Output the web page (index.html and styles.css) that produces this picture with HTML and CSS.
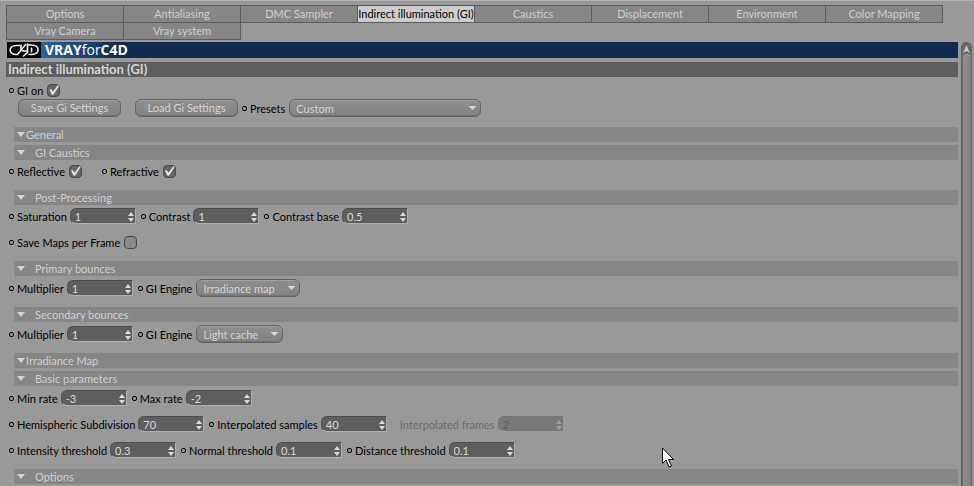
FILE: index.html
```html
<!DOCTYPE html>
<html lang="en">
<head>
<meta charset="utf-8">
<title>VRAYforC4D</title>
<link rel="stylesheet" href="styles.css">
</head>
<body>
<svg class="defs" aria-hidden="true">
  <symbol id="spin" viewBox="0 0 6 10"><path d="M3 0 6 4H0zM0 6h6L3 10z" fill="currentColor"/></symbol>
</svg>

<nav class="tabs">
  <button>Options</button>
  <button>Antialiasing</button>
  <button>DMC Sampler</button>
  <button class="active">Indirect illumination (GI)</button>
  <button>Caustics</button>
  <button>Displacement</button>
  <button>Environment</button>
  <button>Color Mapping</button>
  <button>Vray Camera</button>
  <button>Vray system</button>
</nav>

<div class="body">
  <main class="panel">
    <div class="banner">
      <svg class="logo" viewBox="0 0 34 16" aria-hidden="true">
        <rect width="34" height="16" fill="#050505"/>
        <g fill="none" stroke="#f4f4f4" stroke-width="1.600">
          <path d="M13 3.500H9.500C1 3.500 1 12.500 9.500 12.500h1L19 2"/>
          <path d="M14 2.500v4c0 2 1 2.500 3 2.500h3"/>
          <path d="M20.500 1.500v9L16 14.500"/>
          <path d="M20.500 3H24c9.500 0 9.500 9.500 0 9.500h-2.500M24.500 5.500v5"/>
        </g>
      </svg>
      <div class="brand"><b>VRAY</b>for<b>C4D</b></div>
    </div>
    <h1>Indirect illumination (GI)</h1>

    <div class="intro">
      <div class="row"><label class="dot check">GI on<input type="checkbox" checked></label></div>
      <div class="row">
        <div class="actions">
          <button class="pill">Save Gi Settings</button>
          <button class="pill">Load Gi Settings</button>
        </div>
        <label class="dot" for="presets">Presets</label>
        <span class="drop wide"><select id="presets"><option>Custom</option></select></span>
      </div>
    </div>

    <h2>General</h2>
    <h3>GI Caustics</h3>
    <div class="rows tight">
      <div class="row spread">
        <label class="dot check">Reflective<input type="checkbox" checked></label>
        <label class="dot check">Refractive<input type="checkbox" checked></label>
      </div>
    </div>

    <h3>Post-Processing</h3>
    <div class="rows tight">
      <div class="row">
        <label class="dot" for="sat">Saturation</label>
        <span class="num"><input id="sat" value="1"><svg><use href="#spin"/></svg></span>
        <label class="dot" for="con">Contrast</label>
        <span class="num"><input id="con" value="1"><svg><use href="#spin"/></svg></span>
        <label class="dot" for="base">Contrast base</label>
        <span class="num"><input id="base" value="0.5"><svg><use href="#spin"/></svg></span>
      </div>
      <div class="row"><label class="dot check">Save Maps per Frame<input type="checkbox"></label></div>
    </div>

    <h3>Primary bounces</h3>
    <div class="rows">
      <div class="row">
        <label class="dot" for="mul1">Multiplier</label>
        <span class="num"><input id="mul1" value="1"><svg><use href="#spin"/></svg></span>
        <label class="dot" for="eng1">GI Engine</label>
        <span class="drop"><select id="eng1"><option>Irradiance map</option></select></span>
      </div>
    </div>

    <h3>Secondary bounces</h3>
    <div class="rows">
      <div class="row">
        <label class="dot" for="mul2">Multiplier</label>
        <span class="num"><input id="mul2" value="1"><svg><use href="#spin"/></svg></span>
        <label class="dot" for="eng2">GI Engine</label>
        <span class="drop"><select id="eng2"><option>Light cache</option></select></span>
      </div>
    </div>

    <h2>Irradiance Map</h2>
    <h3>Basic parameters</h3>
    <div class="rows">
      <div class="row">
        <label class="dot" for="min">Min rate</label>
        <span class="num"><input id="min" value="-3"><svg><use href="#spin"/></svg></span>
        <label class="dot" for="max">Max rate</label>
        <span class="num"><input id="max" value="-2"><svg><use href="#spin"/></svg></span>
      </div>
      <div class="row">
        <label class="dot" for="hemi">Hemispheric Subdivision</label>
        <span class="num"><input id="hemi" value="70"><svg><use href="#spin"/></svg></span>
        <label class="dot" for="samp">Interpolated samples</label>
        <span class="num"><input id="samp" value="40"><svg><use href="#spin"/></svg></span>
        <label class="dot off" for="frames">Interpolated frames</label>
        <span class="num off"><input id="frames" value="2" disabled><svg><use href="#spin"/></svg></span>
      </div>
      <div class="row">
        <label class="dot" for="int">Intensity threshold</label>
        <span class="num"><input id="int" value="0.3"><svg><use href="#spin"/></svg></span>
        <label class="dot" for="nor">Normal threshold</label>
        <span class="num"><input id="nor" value="0.1"><svg><use href="#spin"/></svg></span>
        <label class="dot" for="dis">Distance threshold</label>
        <span class="num"><input id="dis" value="0.1"><svg><use href="#spin"/></svg></span>
      </div>
    </div>

    <h3>Options</h3>
  </main>

  <div class="scrollbar">
    <svg viewBox="0 0 7 8" aria-hidden="true"><path d="M3.500 0 7 8 3.500 6 0 8z" fill="#c8c8c8"/></svg>
    <div class="thumb"></div>
  </div>
</div>

<svg class="cursor" viewBox="0 0 12 21" aria-hidden="true">
  <path d="M.5 1v15.500L4 13l3 7 2.500-1-3-6.500h5z" fill="#fff" stroke="#000"/>
</svg>
</body>
</html>
```
FILE: styles.css
```css
*, *::before, *::after { box-sizing: border-box; }

body {
  margin: 0;
  height: 100vh;
  overflow: hidden;
  display: flex;
  flex-direction: column;
  background: #999;
  border-top: 1px solid #b4b4b4;
  color: #000;
  font: 11px/15px Lato, Roboto, sans-serif;
}

button, input, select { font: inherit; margin: 0; }
.defs { position: absolute; width: 0; height: 0; }

.tabs {
  display: grid;
  grid-template-columns: repeat(8, minmax(0, 1fr));
  grid-auto-rows: 17px;
  margin: 4px 32px 0 6px;
}
.tabs button {
  margin: 0 -1px -1px 0;
  padding: 0 0 2px;
  border: 1px solid #5c5c5c;
  background: #868686;
  color: #d0d0d0;
  white-space: nowrap;
}
.tabs .active { background: #cdcdcd; color: #000; }

.body {
  flex: 1;
  min-height: 0;
  display: flex;
  gap: 3px;
  margin: 3px 2px 0 6px;
}
.panel { flex: 1; min-width: 0; }

.banner {
  display: flex;
  height: 16px;
  margin-left: 1px;
  background: linear-gradient(90deg, #2467a0 34px, #132a50 110px);
}
.logo { width: 34px; height: 16px; }
.brand {
  padding-left: 4px;
  color: #fff;
  font: 14px/16px "Open Sans", sans-serif;
}

h1, h2, h3 { margin: 0; height: 15px; line-height: 15px; }
h1 {
  margin-top: 4px;
  padding-left: 2px;
  background: #5e5e5e;
  color: #d6d6d6;
  font-size: 13px;
}
h2, h3 {
  display: flex;
  align-items: center;
  margin: 0 0 3px 8px;
  padding-left: 3px;
  background: #868686;
  color: #d0d0d0;
  font-size: 11px;
  font-weight: 400;
}
h2::before, h3::before {
  content: "";
  width: 8px;
  height: 5px;
  margin-right: 1px;
  background: #d8d8d8;
  clip-path: polygon(0 0, 100% 0, 50% 100%);
}
h3::before { margin-right: 10px; }

.intro { margin: 4px 0 10px; }
.rows { display: grid; gap: 8px; margin-bottom: 10px; }
.tight { margin-top: -1px; }
.row { display: flex; align-items: center; height: 18px; padding-left: 3px; }
.spread { gap: 20px; }
.actions { display: flex; gap: 14px; margin: 0 4px 0 9px; }

.dot { display: flex; align-items: center; white-space: nowrap; }
.dot::before {
  content: "";
  width: 5px;
  height: 5px;
  margin-right: 3px;
  border: 1px solid #000;
  border-radius: 2px;
}
.num + .dot { margin-left: 5px; }
.dot.off { color: #6a6a6a; }
.dot.off::before { border-color: transparent; }

.check input {
  appearance: none;
  width: 13px;
  height: 13px;
  margin-left: 4px;
  border: 1px solid #484848;
  border-radius: 4px;
  background: #8a8a8a;
  display: grid;
}
.check input:checked { background: #666; }
.check input:checked::before {
  content: "";
  background: #e6e6e6;
  clip-path: polygon(10% 48%, 26% 42%, 42% 66%, 86% 6%, 98% 14%, 46% 94%, 34% 94%);
}

.pill, .drop select {
  height: 18px;
  border: 1px solid #626262;
  border-radius: 6px;
  background: linear-gradient(#8e8e8e, #828282);
  box-shadow: inset 0 1px #a0a0a0, inset 0 -1px #747474;
  color: #d6d6d6;
}
.pill { width: 103px; padding: 0; line-height: 16px; }

.drop { position: relative; margin-left: 4px; }
.drop select { appearance: none; display: block; padding: 0 24px 0 6px; }
.drop::after {
  content: "";
  position: absolute;
  right: 5px;
  top: 7px;
  width: 8px;
  height: 4px;
  background: #d8d8d8;
  clip-path: polygon(0 0, 100% 0, 50% 100%);
}
.wide select { width: 192px; }

.num {
  position: relative;
  width: 66px;
  height: 16px;
  margin-left: 3px;
  border: 1px solid;
  border-color: #4c4c4c #b0b0b0 #b0b0b0 #505050;
  border-radius: 6px 0 0 6px;
  background: #5e5e5e;
  color: #dcdcdc;
}
.num input {
  display: block;
  width: 100%;
  height: 14px;
  padding: 0 10px 0 4px;
  border: 0;
  background: none;
  color: inherit;
}
.num svg { position: absolute; right: 1px; top: 3px; width: 6px; height: 10px; }
.num.off { background: #787878; border-color: #747474 #9c9c9c #9c9c9c #747474; color: #5c5c5c; }
.num.off svg { color: #a0a0a0; }

.scrollbar {
  display: flex;
  flex-direction: column;
  align-items: center;
  width: 11px;
  border: 1px solid #606060;
  border-bottom: 0;
  border-radius: 6px 6px 0 0;
  background: #686868;
}
.scrollbar svg { width: 7px; height: 8px; margin: 2px 0 1px; }
.thumb {
  flex: 1;
  width: 8px;
  border-radius: 4px 4px 0 0;
  background: linear-gradient(90deg, #8e8e8e, #828282);
  border-top: 1px solid #a4a4a4;
}

.cursor { position: absolute; left: 662px; top: 447px; width: 12px; height: 21px; }
```
